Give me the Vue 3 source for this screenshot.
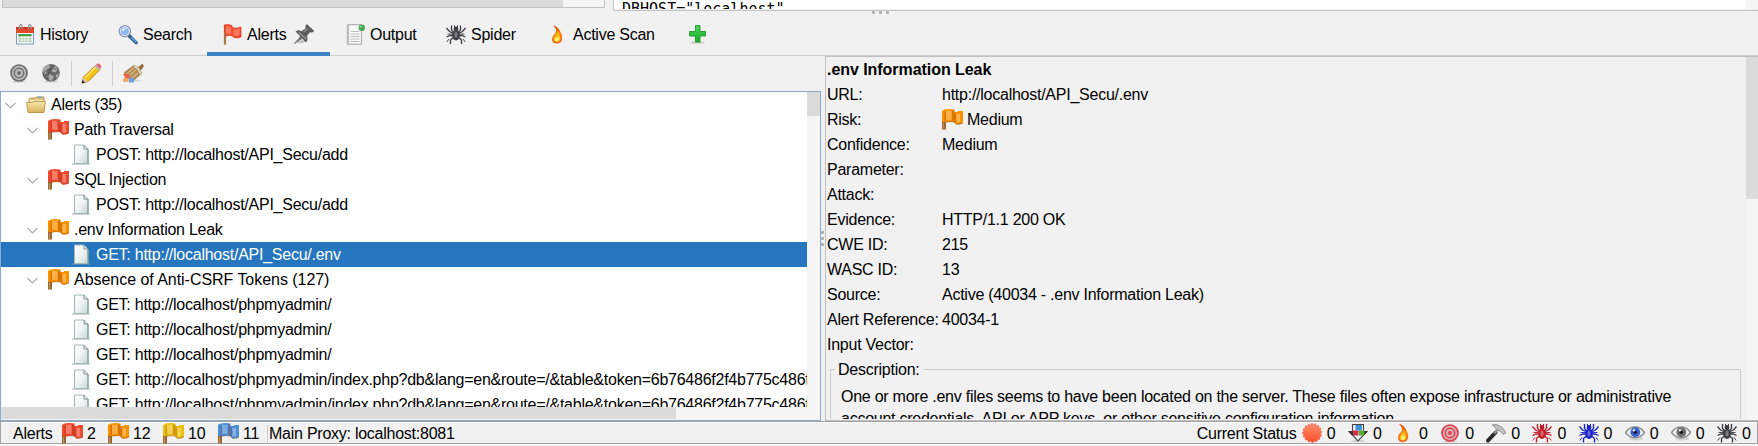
<script setup>
const tabs = [
  { label: 'History', icon: 'calendar' },
  { label: 'Search', icon: 'search' },
  { label: 'Alerts', icon: 'pennant', active: true, pinned: true },
  { label: 'Output', icon: 'output' },
  { label: 'Spider', icon: 'spider', tone: 'dark' },
  { label: 'Active Scan', icon: 'flame' },
]

const longUrl =
  'GET: http://localhost/phpmyadmin/index.php?db&lang=en&route=/&table&token=6b76486f2f4b775c486f6a2d'

const tree = [
  { level: 0, icon: 'folder', text: 'Alerts (35)' },
  { level: 1, icon: 'flag', tone: 'red', text: 'Path Traversal' },
  { level: 2, icon: 'page', text: 'POST: http://localhost/API_Secu/add' },
  { level: 1, icon: 'flag', tone: 'red', text: 'SQL Injection' },
  { level: 2, icon: 'page', text: 'POST: http://localhost/API_Secu/add' },
  { level: 1, icon: 'flag', tone: 'orange', text: '.env Information Leak' },
  { level: 2, icon: 'page', text: 'GET: http://localhost/API_Secu/.env', selected: true },
  { level: 1, icon: 'flag', tone: 'orange', text: 'Absence of Anti-CSRF Tokens (127)', loose: true },
  { level: 2, icon: 'page', text: 'GET: http://localhost/phpmyadmin/' },
  { level: 2, icon: 'page', text: 'GET: http://localhost/phpmyadmin/' },
  { level: 2, icon: 'page', text: 'GET: http://localhost/phpmyadmin/' },
  { level: 2, icon: 'page', text: longUrl },
  { level: 2, icon: 'page', text: longUrl },
]

const details = [
  ['URL:', 'http://localhost/API_Secu/.env'],
  ['Risk:', 'Medium', true],
  ['Confidence:', 'Medium'],
  ['Parameter:', ''],
  ['Attack:', ''],
  ['Evidence:', 'HTTP/1.1 200 OK'],
  ['CWE ID:', '215'],
  ['WASC ID:', '13'],
  ['Source:', 'Active (40034 - .env Information Leak)'],
  ['Alert Reference:', '40034-1'],
  ['Input Vector:', ''],
]

const counts = [
  { tone: 'red', n: 2 },
  { tone: 'orange', n: 12 },
  { tone: 'yellow', n: 10 },
  { tone: 'blue', n: 11 },
]

const scans = [
  { icon: 'burst' },
  { icon: 'download' },
  { icon: 'flame' },
  { icon: 'target', tone: 'crimson' },
  { icon: 'hammer' },
  { icon: 'spider', tone: 'scarlet' },
  { icon: 'spider', tone: 'navy' },
  { icon: 'eye', tone: 'iris' },
  { icon: 'eye', tone: 'grey' },
  { icon: 'spider', tone: 'dark' },
]
</script>

<template>
  <div class="window">
    <svg class="defs" aria-hidden="true">
      <defs>
        <linearGradient id="gGold" x1="0" y1="0" x2="0" y2="1">
          <stop offset="0" stop-color="#f8e7ae" /><stop offset="1" stop-color="#d8b45c" />
        </linearGradient>
        <linearGradient id="gPage" x1="0" y1="0" x2="1" y2="1">
          <stop offset="0" stop-color="#ffffff" /><stop offset=".5" stop-color="#eef4f3" /><stop offset="1" stop-color="#c4d6d4" />
        </linearGradient>
        <linearGradient id="gFire" x1="0" y1="0" x2="0" y2="1">
          <stop offset="0" stop-color="#d8400c" /><stop offset=".45" stop-color="#f68a10" /><stop offset="1" stop-color="#f25c1c" />
        </linearGradient>
        <linearGradient id="gPlus" x1="0" y1="0" x2="0" y2="1">
          <stop offset="0" stop-color="#4fd45c" /><stop offset=".5" stop-color="#2fc03f" /><stop offset="1" stop-color="#12b01c" />
        </linearGradient>
        <linearGradient id="gBurst" x1="0" y1="0" x2="0" y2="1">
          <stop offset="0" stop-color="#ff8f70" /><stop offset="1" stop-color="#fb4b28" />
        </linearGradient>
      </defs>

      <symbol id="calendar" viewBox="0 0 20 21">
        <rect x="1.5" y="3.5" width="17" height="16.5" fill="#f6f9fc" stroke="#7b9cc4" />
        <rect x="1" y="3" width="18" height="6" fill="#e2482c" />
        <rect x="1" y="3" width="18" height="2" fill="#c63a22" />
        <path d="M4.500 5.500V1.500q1.500-1.500 2.500 0V5M13.500 5.500V1.500q1.500-1.500 2.500 0V5" fill="none" stroke="#9a9a9a" stroke-width="1.300" />
        <rect x="3.500" y="10" width="13" height="8" fill="#a8c6a4" />
        <rect x="3.500" y="10" width="13" height="2" fill="#3fa548" />
        <path d="M3.500 13.500h13M3.500 16h13M7 12v6M10 12v6M13.300 12v6" stroke="#fff" stroke-width=".8" />
      </symbol>
      <symbol id="search" viewBox="0 0 21 21">
        <path d="M12 12L19 19" stroke="#2c567f" stroke-width="3.600" stroke-linecap="round" />
        <path d="M14 13.500L19 18.500" stroke="#5d9be0" stroke-width="1.800" stroke-linecap="round" />
        <circle cx="7.200" cy="7" r="5.800" fill="#8db9f0" stroke="#8895ad" stroke-width="1.500" />
        <circle cx="7.200" cy="7" r="4.700" fill="none" stroke="#e9f0fb" stroke-width="1" />
        <path d="M4 6q2-3.500 6-2q-3.500 0-4 3z" fill="#fff" />
      </symbol>
      <symbol id="pennant" viewBox="0 0 20 21">
        <path d="M3 2V20.500" stroke="#8d5a2a" stroke-width="2.200" />
        <path d="M3 2V20.500" stroke="#d8a468" stroke-width=".8" />
        <path d="M2 1q4-1 8 .5v2q5 1.500 9-.5v10q-4 2-8 0v-1q-4-1.500-7 0z" fill="#fa4a30" stroke="#d9371f" stroke-width=".7" />
        <path d="M4 2.500q3-.5 5 .5v7q-2-.8-5-.2zM11.500 5q3 .8 6-.4v6.500q-3 1.500-6 .5z" fill="#ff8468" opacity=".8" />
      </symbol>
      <symbol id="flag" viewBox="0 0 21 21">
        <path d="M2 7V20.500" stroke="#946432" stroke-width="4" />
        <path d="M1.500 8V20.500" stroke="#bd8c58" stroke-width="1.500" />
        <path d="M0 2L2.500 0.500q5-.8 10 0v2.500h3.500V2H21V14q-2.500 1.800-6.500 1.500l-2.500-2.500q-4-.6-8 .3H0z" fill="currentColor" />
        <path d="M4 1.800h5.500v9H4z" fill="#fff" opacity=".27" />
        <path d="M10 1.500h2.500v3H14v9.500l-1.500-1.500L10 11.500zM2.500 2.500H4V12H2.500z" fill="#7a1c00" opacity=".25" />
        <path d="M14.500 5h3.500v8.500h-3.500z" fill="#fff" opacity=".3" />
        <path d="M0 13.300h3.500q4-1.200 8.500-.3l2.500 2.300q3.500.2 6.500-1.300" fill="none" stroke="#783000" stroke-width="1" opacity=".4" />
      </symbol>
      <symbol id="pin" viewBox="0 0 20 20">
        <path d="M.5 19.500L7.500 11.500l2 2z" fill="#777" stroke="#777" />
        <path d="M2 19h7l5-3H8z" fill="#b0b0b0" opacity=".7" />
        <path d="M2 7.500q3-1.500 5.500 0L12 4.500q-.8-2.800.8-4l7 6.500q-1.500 1.800-4 .8L12.500 12q1.500 3.500-.5 6z" fill="#5d5d5d" stroke="#555" stroke-width=".8" />
        <path d="M4.500 8.200l8 7M9.500 8l4-3.300" stroke="#989898" stroke-width="1.300" />
      </symbol>
      <symbol id="output" viewBox="0 0 20 21">
        <rect x="2.500" y=".6" width="14" height="19.600" fill="#fafafa" stroke="#b4b4b4" stroke-width="1.300" />
        <path d="M3.500 1v18.500" stroke="#c3c3c3" stroke-width="1.400" />
        <path d="M5.500 7.500h9M5.500 10h9M5.500 12.500h9M5.500 15h9M5.500 17.500h9" stroke="#bdbdbd" stroke-width="1.200" />
        <circle cx="16.800" cy="3.700" r="3.200" fill="#46aa4c" />
        <circle cx="16" cy="2.700" r="1.300" fill="#83ce85" />
      </symbol>
      <symbol id="spider" viewBox="0 0 20 20">
        <g fill="none" stroke="currentColor" stroke-width="1.350">
          <path d="M8 8L5.500 5.500V1M8 9L3.500 7L.5 3.500M8 11H4L.5 12.500M8 12.500L4.500 15.500V19.500" />
          <path d="M12 8L14.500 5.500V1M12 9L16.500 7L19.500 3.500M12 11H16L19.500 12.500M12 12.500L15.500 15.500V19.500" />
          <path d="M1.500 9.500H7M13 9.500h5.500M3 14.500L.8 17.500M17 14.500l2.200 3" stroke-width=".9" />
        </g>
        <ellipse cx="10" cy="11" rx="3.800" ry="5" fill="currentColor" />
        <circle cx="10" cy="4.500" r="2.400" fill="currentColor" />
        <path d="M8.500 1v2M11.500 1v2" stroke="currentColor" />
        <ellipse cx="10" cy="10.500" rx="1.600" ry="3" fill="#fff" opacity=".32" />
      </symbol>
      <symbol id="flame" viewBox="0 0 20 20">
        <path d="M5 1Q9.500 1.500 12 6.500Q14.500 10 14.200 14Q13.500 19 9 19Q4 19 4 14.500Q4 11.500 7 9Q10 5.500 5 1z" fill="url(#gFire)" />
        <path d="M9.500 6.500Q12 10 12.300 13.500Q12 17.500 9 17.500Q5.500 17.500 5.700 14.500Q6 12 8 10.500Q9.500 9 9.500 6.500z" fill="#ffbc18" />
        <ellipse cx="9.100" cy="14.800" rx="2.200" ry="2.400" fill="#ffee72" />
      </symbol>
      <symbol id="plus" viewBox="0 0 20 20">
        <ellipse cx="11.500" cy="18.500" rx="7" ry="1" fill="#000" opacity=".18" />
        <path d="M9.500 1.500h4.500v6h5.500v4.500H14v6H9.500v-6H3.500V7.500h6z" fill="url(#gPlus)" stroke="#2a9e38" />
      </symbol>
      <symbol id="target" viewBox="0 0 20 20">
        <ellipse cx="10" cy="18.600" rx="7" ry="1" fill="#000" opacity=".15" />
        <circle cx="10" cy="10" r="8" fill="#dadada" stroke="currentColor" stroke-width="1.700" />
        <circle cx="10" cy="10" r="4.700" fill="none" stroke="currentColor" stroke-width="1.500" />
        <circle cx="10" cy="10" r="1.900" fill="currentColor" />
        <circle cx="10" cy="10" r="8.500" fill="currentColor" opacity=".28" />
      </symbol>
      <symbol id="globe" viewBox="0 0 20 20">
        <ellipse cx="10" cy="18.500" rx="7" ry="1" fill="#000" opacity=".15" />
        <circle cx="10" cy="9.800" r="8.800" fill="#686868" />
        <path d="M3 4q3-3 5-2.500l1 3-3 3-1 4-3.500-2q-.5-3 1.500-5.500zM11 5l4-2 2.500 3-3 3.500-4-1zM8 11l5 2-2 5-3-1-2-3.500zM15.500 11l2.500.500-2 3.500-1.500-1z" fill="#a8a8a8" />
        <path d="M2 11q4-7 15-5M7 17q-1-8 7-15" fill="none" stroke="#3f3f3f" stroke-width="1" opacity=".7" />
      </symbol>
      <symbol id="pencil" viewBox="0 0 21 21">
        <path d="M1 20l1.500-6L14.500 2.500l4.500 4L7 18.500z" fill="#f4c414" stroke="#b58710" stroke-width="1" />
        <path d="M4 14.500L15.500 3.500" stroke="#ffe875" stroke-width="1.600" />
        <path d="M14 3l2.500-2.500q3.500.3 4 3.800L18.500 7z" fill="#e06a74" />
        <path d="M13.500 3.500l4.500 4 1.500-1.500L15 2z" fill="#b7b9bf" />
        <path d="M1 20l1.500-5.500L7 18.500z" fill="#e9c9a0" />
        <path d="M.5 20.500L1.600 17l2.500 2.500z" fill="#2c2c2c" />
      </symbol>
      <symbol id="broom" viewBox="0 0 22 21">
        <path d="M14 6L20.500 .5l1.300 3L17.500 9z" fill="#9a6b38" />
        <path d="M2.500 9.500L12 2.500q6 1 7.500 8L11 17.500q-6-1-8.500-8z" fill="#b98f5a" stroke="#84663e" stroke-width=".8" />
        <path d="M12 3q5.500 2 6.500 8" fill="none" stroke="#ddd3bd" stroke-width="2" />
        <path d="M5 10.500l6-5M7 13l6.500-5.500M9.500 15.500l6-5" stroke="#e3c79a" />
        <path d="M1 11h5l2 2v3H4z" fill="#ef6044" />
        <path d="M1.500 15h4l2 3.500L1 19z" fill="#f7a35c" />
        <path d="M7 14.500l5 .5v4.500H7z" fill="#6ea3dd" />
        <ellipse cx="15" cy="17.500" rx="4" ry="1" fill="#000" opacity=".12" />
      </symbol>
      <symbol id="folder" viewBox="0 0 20 18">
        <path d="M3 14V3.500L4.500 2H9l1.500-1H18V14z" fill="#e2c476" stroke="#b79a50" />
        <path d="M4 4h13v5H4z" fill="#f9efcb" />
        <path d="M.6 6.500H6L7.500 5.500H19.400L18 16.500H2z" fill="url(#gGold)" stroke="#c09d4e" />
        <path d="M12 1.200h4" stroke="#5ea5d8" stroke-width="1.200" />
      </symbol>
      <symbol id="page" viewBox="0 0 18 21">
        <path d="M0 20h18" stroke="#8e9f9e" stroke-width="1.400" opacity=".6" />
        <path d="M2.500 1H12l4 4V19.500H2.500z" fill="url(#gPage)" stroke="#a4b8b6" />
        <path d="M16 5V19.500M12 1v4h4" fill="none" stroke="#7c9290" />
      </symbol>
      <symbol id="chevron" viewBox="0 0 11 7">
        <path d="M.5 1L5.500 6L10.500 1" fill="none" stroke="#acacac" stroke-width="1.200" />
      </symbol>
      <symbol id="burst" viewBox="0 0 20 20">
        <path d="M10 0l1.500 2L13.500.6l.8 2.300 2.400-.5.100 2.500 2.300.4-.8 2.300 1.700 1.400L18.500 11l1.200 2-2.200 1 .3 2.400-2.400.2-.7 2.300-2.300-.8L10.500 20l-1.700-1.800-2.200 1-1-2.300-2.400 0 .1-2.500L1 13.700l1-2.200L0 10l1.800-1.700L.9 6.100l2.300-.8.200-2.500 2.400.3.900-2.200 2.100 1.100z" fill="url(#gBurst)" stroke="#f0644a" stroke-width=".6" />
      </symbol>
      <symbol id="download" viewBox="0 0 20 20">
        <ellipse cx="10" cy="18" rx="7" ry="1.200" fill="#000" opacity=".15" />
        <path d="M4.500 1.500h11v7H19L10 18 1 8.500h3.500z" fill="#f3f3f3" stroke="#444" stroke-width="1.100" />
        <rect x="7.500" y="2" width="6.500" height="5.500" fill="#3d93d5" />
        <rect x="4.500" y="7.500" width="6" height="5" fill="#d42f4c" />
        <rect x="11" y="7.500" width="5" height="5" fill="#58ae2d" />
        <path d="M.5 8.500H5v3.500H3.700zM16 8.500h3.500l-3.200 3.500z" fill="#333" />
      </symbol>
      <symbol id="hammer" viewBox="0 0 21 20">
        <path d="M2 18L10 9.500" stroke="#2c2c2c" stroke-width="4" stroke-linecap="round" />
        <path d="M8.500 10.500L13 6" stroke="#9a9a9a" stroke-width="2.400" />
        <path d="M6.500 1.500Q11 .3 14 2.500l3.500 2 3.500 5.500-3 1.500-3-3.500-4-1.500q-1-3.500-4.500-5z" fill="#c0c0c0" stroke="#868686" stroke-width=".9" />
      </symbol>
      <symbol id="eye" viewBox="0 0 20 20">
        <ellipse cx="11" cy="15.500" rx="7" ry="2" fill="#777" opacity=".25" />
        <path d="M.5 9.500Q4 4 10 4T19.500 9.500Q16 14.800 10 14.800T.5 9.500z" fill="#f4f4f4" stroke="#8b8b8b" stroke-width="1.500" />
        <circle cx="10.300" cy="9.200" r="4.900" fill="currentColor" />
        <circle cx="10.300" cy="9.200" r="1.800" fill="#17171f" />
        <circle cx="9" cy="7.300" r="1.200" fill="#fff" opacity=".8" />
      </symbol>
    </svg>

    <div class="upper">
      <div class="upper-left"><div class="upper-thumb"></div></div>
      <div class="upper-right">
        <pre class="code">DBHOST="localhost"</pre>
        <div class="upper-scroll"></div>
      </div>
    </div>

    <nav class="tabs">
      <div v-for="t in tabs" :key="t.label" class="tab" :class="{ active: t.active }">
        <svg class="ico tab-ico" :class="t.tone"><use :href="'#' + t.icon" /></svg>
        <span>{{ t.label }}</span>
        <svg v-if="t.pinned" class="ico pin"><use href="#pin" /></svg>
      </div>
      <div class="tab"><svg class="ico"><use href="#plus" /></svg></div>
      <div class="grip grip-h"><i></i><i></i><i></i></div>
    </nav>

    <main class="main">
      <section class="left">
        <div class="toolbar">
          <svg class="ico tool grey"><use href="#target" /></svg>
          <svg class="ico tool"><use href="#globe" /></svg>
          <span class="sep"></span>
          <svg class="ico pencil"><use href="#pencil" /></svg>
          <span class="sep"></span>
          <svg class="ico broom"><use href="#broom" /></svg>
        </div>
        <div class="tree">
          <div class="rows">
            <div
              v-for="(r, i) in tree"
              :key="i"
              class="row"
              :class="['lv' + r.level, { selected: r.selected, loose: r.loose }]"
            >
              <svg v-if="r.level < 2" class="chev"><use href="#chevron" /></svg>
              <svg class="node" :class="[r.icon, r.tone]"><use :href="'#' + r.icon" /></svg>
              <span class="label">{{ r.text }}</span>
            </div>
          </div>
          <div class="vbar"><div class="vthumb"></div></div>
          <div class="hbar"><div class="hthumb"></div></div>
        </div>
      </section>
      <div class="splitter"><div class="grip grip-v"><i></i><i></i><i></i></div></div>
      <section class="detail">
        <div class="detail-body">
          <div class="title">.env Information Leak</div>
          <div v-for="d in details" :key="d[0]" class="field">
            <span class="key label">{{ d[0] }}</span>
            <svg v-if="d[2]" class="node flag orange risk"><use href="#flag" /></svg>
            <span class="label">{{ d[1] }}</span>
          </div>
          <fieldset class="desc">
            <legend>Description:</legend>
            <p>
              One or more .env files seems to have been located on the server. These files often expose infrastructure or administrative<br />
              account credentials, API or APP keys, or other sensitive configuration information.
            </p>
          </fieldset>
        </div>
        <div class="detail-scroll"><div class="detail-thumb"></div></div>
      </section>
    </main>

    <footer class="status">
      <span class="status-label">Alerts</span>
      <span v-for="c in counts" :key="c.tone" class="count">
        <svg class="node flag" :class="c.tone"><use href="#flag" /></svg>{{ c.n }}
      </span>
      <span class="proxy">Main Proxy: localhost:8081</span>
      <span class="current">Current Status</span>
      <span v-for="(s, i) in scans" :key="i" class="scan">
        <svg class="ico" :class="s.tone"><use :href="'#' + s.icon" /></svg>0
      </span>
    </footer>
  </div>
</template>

<style>
body {
  background: #f8f8f8;
}
</style>

<style scoped>
.window {
  width: 1758px;
  height: 446px;
  overflow: hidden;
  display: flex;
  flex-direction: column;
  background: #f1f1f1;
  color: #000;
  font: 16px/25px "Liberation Sans", Arial, sans-serif;
  letter-spacing: -0.25px;
  white-space: nowrap;
}
.window * {
  box-sizing: border-box;
}
.defs {
  position: absolute;
  width: 0;
  height: 0;
}
.ico {
  width: 20px;
  height: 20px;
  flex: none;
}
.dark { color: #3c3c42; }
.scarlet { color: #c01f2a; }
.navy { color: #1a22c4; }
.iris { color: #3c62d0; }
.grey { color: #6e6e6e; }
.crimson { color: #e0414f; }
.red { color: #f04a30; }
.orange { color: #fa9200; }
.yellow { color: #ecc010; }
.blue { color: #4c8fd8; }

.upper {
  height: 11px;
  display: flex;
  gap: 8px;
  align-items: flex-start;
}
.upper-left {
  width: 603px;
  margin-left: 2px;
  height: 8px;
  border: solid #c2c2c2;
  border-width: 0 1px 1px;
  background: #f5f5f5;
}
.upper-thumb {
  width: 560px;
  height: 7px;
  background: #dbdbdb;
}
.upper-right {
  flex: 1;
  height: 11px;
  display: flex;
  border: solid #c2c2c2;
  border-width: 0 0 1px 1px;
  background: #f1f1f1;
}
.code {
  flex: 1;
  margin: 0;
  height: 9px;
  overflow: hidden;
  background: #fff;
  padding-left: 8px;
  font: 15px/18px "DejaVu Sans Mono", monospace;
  letter-spacing: 0;
}
.upper-scroll {
  width: 12px;
  height: 9px;
  background: #f5f5f5;
}

.tabs {
  position: relative;
  height: 45px;
  display: grid;
  grid-template-columns: 103px 104px 123px 101px 102px 138px 60px;
  border-bottom: 1px solid #cdcdcd;
}
.tab {
  display: flex;
  align-items: center;
  padding: 5px 0 4px 15px;
  gap: 5px;
  height: 45px;
}
.tab-ico {
  height: 21px;
}
.active {
  border-bottom: 4px solid #3d82c6;
  padding-bottom: 0;
}
.pin {
  margin-left: 3px;
  margin-top: -1px;
}
.grip {
  position: absolute;
  display: flex;
  gap: 3px;
}
.grip i {
  width: 3px;
  height: 3px;
  border-radius: 1px;
  background: #afafaf;
}
.grip-h {
  left: 872px;
  top: 0;
  gap: 4px;
}

.main {
  height: 365px;
  display: flex;
}
.left {
  width: 821px;
  display: flex;
  flex-direction: column;
}
.toolbar {
  height: 35px;
  display: flex;
  align-items: center;
  padding: 0 0 1px 9px;
}
.tool + .tool {
  margin-left: 12px;
}
.sep {
  width: 1px;
  height: 25px;
  margin: 0 9px 0 10px;
  background: #cfcfcf;
}
.pencil {
  width: 21px;
  height: 21px;
}
.broom {
  width: 22px;
  height: 21px;
}
.tree {
  flex: 1;
  display: grid;
  grid-template: 315px 13px / 806px 13px;
  border: 1px solid #87a9d2;
  background: #fff;
}
.rows {
  overflow: hidden;
}
.row {
  display: flex;
  align-items: center;
  height: 25px;
}
.label {
  line-height: 23px;
  padding-bottom: 1px;
}
.lv0 { padding-left: 4px; }
.lv1 { padding-left: 26px; }
.lv2 { padding-left: 71px; }
.lv1 .node { margin-right: 5px; }
.loose { letter-spacing: -0.04px; }
.selected {
  background: #2675bf;
  color: #fff;
}
.chev {
  width: 11px;
  height: 7px;
  margin-right: 10px;
  margin-top: 1px;
  flex: none;
}
.node {
  flex: none;
  width: 21px;
  height: 21px;
  margin-right: 6px;
}
.folder {
  width: 20px;
  height: 18px;
  margin-right: 5px;
}
.page {
  width: 18px;
}
.vbar {
  background: #f5f5f5;
}
.vthumb {
  height: 24px;
  background: #dbdbdb;
}
.hbar {
  grid-column: 1 / 3;
  background: #f5f5f5;
}
.hthumb {
  width: 675px;
  height: 12px;
  background: #dbdbdb;
}
.splitter {
  position: relative;
  width: 4px;
}
.grip-v {
  flex-direction: column;
  left: 0;
  top: 175px;
}
.detail {
  flex: 1;
  display: flex;
  border: solid #c0c0c0;
  border-width: 1px 0 1px 1px;
}
.detail-body {
  width: 920px;
  height: 362px;
  padding-left: 1px;
  overflow: hidden;
}
.title {
  font-weight: bold;
  letter-spacing: -0.05px;
}
.field {
  height: 25px;
  display: flex;
  align-items: center;
}
.key {
  width: 115px;
}
.risk {
  margin-right: 4px;
}
.desc {
  margin: 0 5px 0 3px;
  padding: 0 0 20px 10px;
  border: 1px solid #cbcbcb;
}
.desc legend {
  margin-left: -6px;
  padding: 0 5px 0 3px;
}
.desc p {
  margin: 4px 0 0;
  line-height: 22px;
}
.detail-scroll {
  flex: 1;
  background: #f5f5f5;
}
.detail-thumb {
  height: 142px;
  background: #dbdbdb;
}

.status {
  height: 23px;
  display: flex;
  align-items: center;
  border: 1px solid #a2a2a2;
  box-shadow: inset 0 1px #fff, 0 1px #fff;
  padding: 1px 5px 0 12px;
}
.status-label {
  width: 49px;
}
.count {
  display: flex;
  align-items: center;
  width: 55px;
}
.count:nth-child(2) {
  width: 46px;
}
.count .node {
  margin-right: 4px;
}
.proxy {
  margin-left: -6px;
  padding-left: 1px;
  line-height: 17px;
  border-left: 1px solid #cdcdcd;
}
.current {
  margin-left: auto;
  width: 105px;
}
.scan {
  display: flex;
  align-items: center;
  gap: 5px;
  width: 46.15px;
}
.scan:last-child {
  width: 35px;
}
</style>
